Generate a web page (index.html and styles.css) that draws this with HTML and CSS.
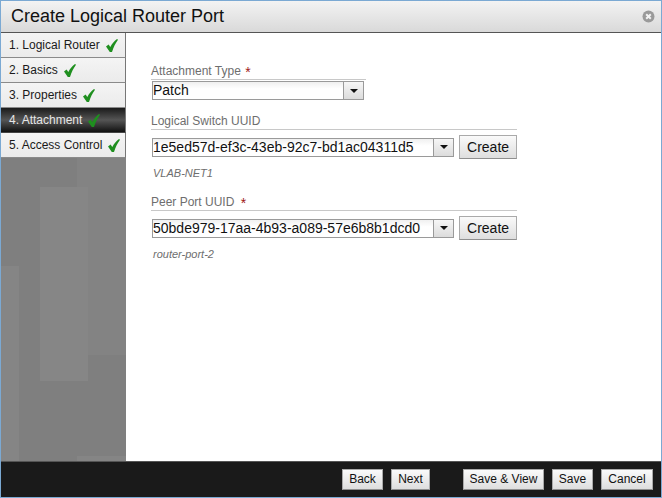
FILE: index.html
```html
<!DOCTYPE html>
<html lang="en">
<head>
<meta charset="utf-8">
<title>Create Logical Router Port</title>
<link rel="stylesheet" href="styles.css">
</head>
<body>
<div class="window">
  <header class="titlebar">
    <h1 class="title">Create Logical Router Port</h1>
    <svg class="close" width="13" height="13" viewBox="0 0 13 13"><circle cx="6.5" cy="6.5" r="6" fill="#9a9a9a"/><path d="M4.2 4.2l4.6 4.6M8.8 4.2l-4.6 4.6" stroke="#f2f2f2" stroke-width="2"/></svg>
  </header>
  <div class="main">
    <nav class="sidebar">
      <span class="patch patch-a"></span>
      <span class="patch patch-b"></span>
      <span class="patch patch-c"></span>
      <span class="patch patch-d"></span>
      <ul class="steps">
        <li class="step"><span>1. Logical Router</span><svg class="check" width="12" height="13" viewBox="0 0 12 13"><path d="M0 7.500l2.600-1.900 1.700 2.500C5.800 5 8 2 11 0l1 .8C9.500 4 7.500 8.500 6 13H3.800z" fill="#1f8f1f"/></svg></li>
        <li class="step"><span>2. Basics</span><svg class="check" width="12" height="13" viewBox="0 0 12 13"><path d="M0 7.500l2.600-1.900 1.700 2.500C5.800 5 8 2 11 0l1 .8C9.500 4 7.500 8.500 6 13H3.800z" fill="#1f8f1f"/></svg></li>
        <li class="step"><span>3. Properties</span><svg class="check" width="12" height="13" viewBox="0 0 12 13"><path d="M0 7.500l2.600-1.900 1.700 2.500C5.800 5 8 2 11 0l1 .8C9.500 4 7.500 8.500 6 13H3.800z" fill="#1f8f1f"/></svg></li>
        <li class="step step-active"><span>4. Attachment</span><svg class="check" width="12" height="13" viewBox="0 0 12 13"><path d="M0 7.500l2.600-1.900 1.700 2.500C5.800 5 8 2 11 0l1 .8C9.500 4 7.500 8.500 6 13H3.800z" fill="#1f8f1f"/></svg></li>
        <li class="step"><span>5. Access Control</span><svg class="check" width="12" height="13" viewBox="0 0 12 13"><path d="M0 7.500l2.600-1.900 1.700 2.500C5.800 5 8 2 11 0l1 .8C9.500 4 7.500 8.500 6 13H3.800z" fill="#1f8f1f"/></svg></li>
      </ul>
    </nav>
    <section class="form">
      <div class="field field-type">
        <div class="label label-short">Attachment Type <span class="req">*</span></div>
        <div class="row">
          <div class="combo combo-short"><span class="value">Patch</span><span class="arrow"><i class="tri"></i></span></div>
        </div>
      </div>
      <div class="field field-switch">
        <div class="label">Logical Switch UUID</div>
        <div class="row row-spaced">
          <div class="combo"><span class="value">1e5ed57d-ef3c-43eb-92c7-bd1ac04311d5</span><span class="arrow"><i class="tri"></i></span></div>
          <button class="btn btn-create">Create</button>
        </div>
        <div class="hint">VLAB-NET1</div>
      </div>
      <div class="field field-peer">
        <div class="label">Peer Port UUID <span class="req">*</span></div>
        <div class="row row-spaced">
          <div class="combo"><span class="value">50bde979-17aa-4b93-a089-57e6b8b1dcd0</span><span class="arrow"><i class="tri"></i></span></div>
          <button class="btn btn-create">Create</button>
        </div>
        <div class="hint">router-port-2</div>
      </div>
    </section>
  </div>
  <footer class="footer">
    <div class="btn-group">
      <button class="btn btn-back">Back</button>
      <button class="btn btn-next">Next</button>
    </div>
    <div class="btn-group">
      <button class="btn btn-view">Save &amp; View</button>
      <button class="btn btn-save">Save</button>
      <button class="btn btn-cancel">Cancel</button>
    </div>
  </footer>
</div>
</body>
</html>
```
FILE: styles.css
```css
* { box-sizing: border-box; }
html, body { margin: 0; padding: 0; }
body { font-family: "Liberation Sans", Arial, sans-serif; background: #fff; }

.window {
  width: 662px;
  height: 498px;
  border: 1px solid #7ba9d3;
  display: flex;
  flex-direction: column;
  overflow: hidden;
}

.titlebar {
  height: 32px;
  flex: none;
  display: flex;
  align-items: center;
  justify-content: space-between;
  padding: 0 6px 0 10px;
  background: linear-gradient(#f3f3f3, #d9d9d9);
  border-bottom: 1px solid #555;
}
.title { margin: 0; font-size: 18px; font-weight: normal; color: #111; }
.close { flex: none; }

.main { flex: 1; display: flex; min-height: 0; }

.sidebar {
  position: relative;
  width: 125px;
  flex: none;
  background: #7f7f7f;
  overflow: hidden;
}
.patch { position: absolute; }
.patch-a { left: 39px; top: 154px; width: 48px; height: 194px; background: #868686; z-index: 1; }
.patch-b { left: 76px; top: 124px; width: 49px; height: 198px; background: #838383; }
.patch-c { left: 0; top: 233px; width: 18px; height: 195px; background: #858585; }
.patch-d { left: 76px; top: 423px; width: 49px; height: 5px; background: #858585; }

.steps { position: relative; z-index: 2; list-style: none; margin: 0; padding: 0; }
.step {
  height: 25px;
  display: flex;
  align-items: center;
  gap: 6px;
  padding-left: 8px;
  font-size: 12px;
  color: #1a1a1a;
  background: linear-gradient(#f4f4f4, #ebebeb);
  border-right: 1px solid #777;
  border-bottom: 1px solid #8a8a8a;
}
.step-active {
  color: #e6e6e6;
  background: linear-gradient(#1a1a1a, #555 50%, #111);
  border-bottom-color: #444;
}
.check { flex: none; }

.form { flex: 1; padding: 32px 0 0 25px; }
.field { width: 366px; }
.field-switch { margin-top: 15px; }
.field-peer { margin-top: 16px; }
.label {
  font-size: 12px;
  line-height: 13px;
  color: #6e6e6e;
  height: 15px;
  border-bottom: 1px solid #c8c8c8;
}
.label-short { width: 215px; }
.req { color: #a01818; font-size: 14px; line-height: 13px; margin-left: 3px; vertical-align: -2px; }
.label-short .req { margin-left: 1px; }
.row { display: flex; align-items: center; padding-top: 1px; }
.row-spaced { padding-top: 5px; gap: 5px; }
.combo {
  width: 303px;
  height: 19px;
  margin-left: 1px;
  display: flex;
  border: 1px solid #9a9a9a;
  background: linear-gradient(#f0f0f0, #fff 40%);
}
.combo-short { width: 212px; }
.value {
  flex: 1;
  font-size: 14px;
  line-height: 17px;
  color: #111;
  white-space: nowrap;
  overflow: hidden;
}
.arrow {
  width: 20px;
  flex: none;
  display: flex;
  align-items: center;
  justify-content: center;
  border-left: 1px solid #9a9a9a;
  background: linear-gradient(#f6f6f6, #dcdcdc);
}
.tri {
  width: 0;
  height: 0;
  border-left: 4px solid transparent;
  border-right: 4px solid transparent;
  border-top: 4px solid #111;
}
.hint {
  margin-top: 7px;
  padding-left: 2px;
  font-size: 11px;
  line-height: 14px;
  font-style: italic;
  color: #6e6e6e;
}

.btn {
  height: 21px;
  padding: 0 0 2px;
  font-family: inherit;
  font-size: 12px;
  color: #111;
  border: 1px solid #aaa;
  border-bottom-color: #8f8f8f;
  border-radius: 0;
  background: linear-gradient(#fafafa, #dedede);
}
.btn-create { height: 24px; width: 58px; padding: 0; font-size: 14px; }
.btn-back { width: 41px; }
.btn-next { width: 39px; }
.btn-view { width: 81px; }
.btn-save { width: 41px; }
.btn-cancel { width: 52px; }

.footer {
  height: 36px;
  flex: none;
  display: flex;
  justify-content: flex-end;
  align-items: center;
  gap: 33px;
  padding: 0 8px 0 0;
  background: #1a1a1a;
  border-top: 1px solid #555;
}
.btn-group { display: flex; gap: 8px; }
```
